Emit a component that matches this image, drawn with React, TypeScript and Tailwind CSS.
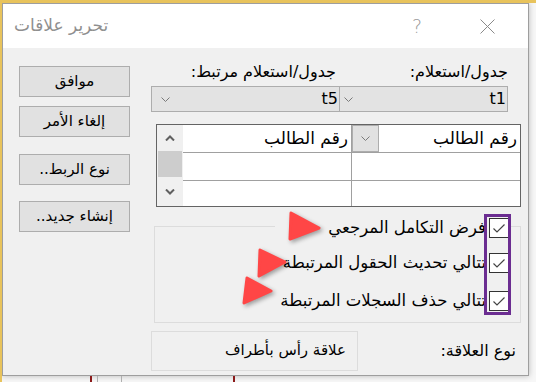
import React from "react";

const ar = "font-['DejaVu_Sans',sans-serif]";

function Chevron({ className = "" }: { className?: string }) {
  return (
    <svg width="9" height="5" viewBox="0 0 9 5" className={className}>
      <path d="M0.5 0.5 L4.5 4.5 L8.5 0.5" fill="none" stroke="#7a7a7a" strokeWidth="1" />
    </svg>
  );
}

function Check() {
  return (
    <div className="flex h-5 w-5 shrink-0 items-center justify-center border border-[#333] bg-white">
      <svg width="14" height="11" viewBox="0 0 14 11">
        <path d="M1.5 5.5 L5 9 L12.5 1.5" fill="none" stroke="#444" strokeWidth="1.2" />
      </svg>
    </div>
  );
}

const buttons = [
  { label: "موافق", mt: "mt-0" },
  { label: "إلغاء الأمر", mt: "mt-[9px]" },
  { label: "نوع الربط..", mt: "mt-[17px]" },
  { label: "إنشاء جديد..", mt: "mt-[16px]" },
];

export default function App() {
  return (
    <div className="relative h-[382px] w-[536px] overflow-hidden border-l-2 border-t-[3px] border-[#e8c35c] bg-[#f7f7f7]">
      <div className="flex h-[373px] w-[527px] flex-col border border-[#9e9e9e] bg-[#f0f0f0] shadow-[0_0_6px_rgba(0,0,0,0.25)]">
        {/* title bar */}
        <div className="flex h-[44px] shrink-0 items-center bg-white pl-[11px] pr-[33px]">
          <span dir="rtl" className={`${ar} text-[17px] text-[#8f8f8f]`}>
            تحرير علاقات
          </span>
          <span className={`${ar} ml-auto text-[19px] font-light text-[#9a9a9a]`}>?</span>
          <svg width="15" height="15" viewBox="0 0 15 15" className="ml-[58px]">
            <path d="M0.5 0.5 L14.5 14.5 M14.5 0.5 L0.5 14.5" stroke="#8a8a8a" strokeWidth="1" />
          </svg>
        </div>

        {/* body */}
        <div dir="rtl" className={`${ar} flex flex-1 justify-between pl-[16px] pr-[7px] text-[16px] text-black`}>
          {/* main column */}
          <div className="flex w-[370px] flex-col pt-[15px]">
            <div className="mr-[13px] flex h-[18px] w-[357px] items-center leading-[18px]">
              <div className="w-[169px] text-right">جدول/استعلام:</div>
              <div className="w-[188px] pr-[3px] text-right">جدول/استعلام مرتبط:</div>
            </div>
            <div className="mr-[13px] mt-[5px] flex h-[26px] w-[357px] border border-[#adadad] bg-[#e3e3e3]">
              <div className="flex w-[168px] items-center justify-between border-l border-[#adadad] pl-[4px] pr-[1px]">
                <span className="text-[16px]">t1</span>
                <Chevron />
              </div>
              <div className="flex flex-1 items-center justify-between pl-[9px] pr-[1px]">
                <span className="text-[16px]">t5</span>
                <Chevron />
              </div>
            </div>

            {/* field grid */}
            <div className="ml-[5px] mt-[12px] flex h-[83px] w-[365px] self-end border border-[#646464] bg-white text-[17px]">
              <div className="flex flex-1 flex-col">
                <div className="flex h-[28px] border-b border-[#a0a0a0]">
                  <div className="flex w-[169px] items-stretch justify-between border-l border-[#a0a0a0] pr-[3px]">
                    <span className="self-center">رقم الطالب</span>
                    <div className="flex w-[27px] items-center justify-center border border-[#adadad] bg-[#e1e1e1]">
                      <Chevron />
                    </div>
                  </div>
                  <div className="flex flex-1 items-center pr-[3px]">رقم الطالب</div>
                </div>
                <div className="flex h-[28px] border-b border-[#a0a0a0]">
                  <div className="w-[169px] border-l border-[#a0a0a0]" />
                  <div className="flex-1" />
                </div>
                <div className="flex flex-1">
                  <div className="w-[169px] border-l border-[#a0a0a0]" />
                  <div className="flex-1" />
                </div>
              </div>
              <div className="flex w-[26px] flex-col bg-[#f0f0f0]">
                <div className="flex h-[26px] items-center justify-center">
                  <svg width="10" height="6" viewBox="0 0 10 6">
                    <path d="M1 5.5 L5 1.5 L9 5.5" fill="none" stroke="#606060" strokeWidth="2" />
                  </svg>
                </div>
                <div className="mx-[1px] h-[26px] bg-[#cdcdcd]" />
                <div className="flex flex-1 items-center justify-center">
                  <svg width="10" height="6" viewBox="0 0 10 6">
                    <path d="M1 0.5 L5 4.5 L9 0.5" fill="none" stroke="#606060" strokeWidth="2" />
                  </svg>
                </div>
              </div>
            </div>

            {/* referential options */}
            <fieldset className="ml-[3px] mt-[11px] w-[367px] self-end border border-[#dcdcdc] pb-[8px] pr-[11px] text-[16.5px]">
              <legend className="flex h-[16px] w-[234px] items-start gap-[3px]">
                <Check />
                <span className="leading-[20px]">فرض التكامل المرجعي</span>
              </legend>
              <div className="mt-[17px] flex items-center gap-[3px]">
                <Check />
                <span>تتالي تحديث الحقول المرتبطة</span>
              </div>
              <div className="mt-[13px] flex items-center gap-[3px]">
                <Check />
                <span>تتالي حذف السجلات المرتبطة</span>
              </div>
            </fieldset>

            <div className="mt-[8px] flex w-[367px] items-center justify-between self-end pr-[2px]">
              <span>نوع العلاقة:</span>
              <div className="flex h-[40px] w-[207px] items-center border border-[#dcdcdc] pr-[11px] text-[15px]">
                علاقة رأس بأطراف
              </div>
            </div>
          </div>

          {/* buttons column */}
          <div className="flex w-[111px] flex-col pt-[18px] text-[15px]">
            {buttons.map((b) => (
              <button
                key={b.label}
                className={`${b.mt} flex h-[31px] items-center justify-center border border-[#adadad] bg-[#e1e1e1]`}
              >
                {b.label}
              </button>
            ))}
          </div>
        </div>
      </div>

      {/* desktop behind the dialog */}
      <div className="flex h-[6px]">
        <div className="w-[88px]" />
        <div className="w-[2px] bg-[#8b1a1a]" />
        <div className="w-[5px]" />
        <div className="w-px bg-[#b0b0b0]" />
        <div className="w-[23px]" />
        <div className="w-px bg-[#b0b0b0]" />
        <div className="w-[111px]" />
        <div className="w-[2px] bg-[#8b1a1a]" />
      </div>

      {/* annotations */}
      <div className="pointer-events-none absolute left-[482px] top-[211px] h-[101px] w-[27px] border-[3px] border-[#6b2d91]" />
      <svg
        width="536"
        height="382"
        className="pointer-events-none absolute left-[-2px] top-[-3px]"
        style={{ filter: "drop-shadow(2px 2px 2px rgba(0,0,0,0.35))" }}
      >
        <g fill="#ff4646" stroke="#ff4646" strokeWidth="3" strokeLinejoin="round">
          <polygon points="291,213 319,228 290,239" />
          <polygon points="260,250 285,262 259,276" />
          <polygon points="247,278 271,291 244,303" />
        </g>
      </svg>
    </div>
  );
}
